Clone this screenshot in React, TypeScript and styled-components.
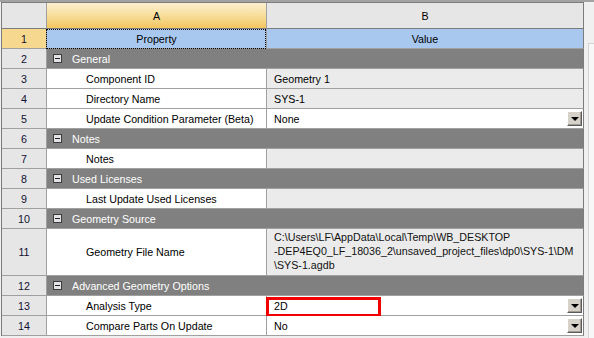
import React from 'react'
import styled, { createGlobalStyle } from 'styled-components'

const GlobalStyle = createGlobalStyle`
    html, body {
        margin: 0;
        padding: 0;
        background: #f0f0f0;
    }
    body {
        font-family: "Liberation Sans", Arial, sans-serif;
        font-size: 10.7px;
        color: #000;
    }
`

const Frame = styled.div`
    display: flex;
    width: 594px;
    height: 338px;
    border-top: 2px solid #a3a3a3;
    box-sizing: border-box;
    overflow: hidden;
`

const Sheet = styled.div`
    display: grid;
    grid-template-columns: 45px 220px 317px;
    grid-template-rows: 26px repeat(10, 20px) 47px repeat(3, 20px);
    margin-left: 1px;
    border-left: 1px solid #7c7c7c;
    border-top: 1px solid #7c7c7c;
    align-self: flex-start;
`

const Cell = styled.div<{ $edge?: boolean }>`
    box-sizing: border-box;
    border-right: 1px solid ${(p) => (p.$edge ? '#7c7c7c' : '#a0a0a0')};
    border-bottom: 1px solid #a0a0a0;
    display: flex;
    align-items: center;
    min-width: 0;
    white-space: nowrap;
    position: relative;
`

const ColHead = styled(Cell)<{ $active?: boolean }>`
    justify-content: center;
    background: ${(p) => p.$active
        ? 'linear-gradient(#fbefcf 0%, #f8e0a0 45%, #f3c660 100%)'
        : '#e6e6e6'};
    border-bottom-color: #7c7c7c;
`

const RowNum = styled(Cell)<{ $active?: boolean }>`
    justify-content: center;
    background: ${(p) => (p.$active ? '#f6d98e' : '#e6e6e6')};
    color: #101030;
`

const TitleCell = styled(Cell)<{ $focus?: boolean }>`
    justify-content: center;
    background: #a8c8f0;
    ${(p) => p.$focus && `
        &::after {
            content: '';
            position: absolute;
            inset: 0 0 -1px -1px;
            border: 1px dotted #000;
        }
    `}
`

const Category = styled(Cell)`
    grid-column: span 2;
    background: #808080;
    color: #fff;
    padding-left: 6px;
    gap: 10px;
`

const Toggle = styled.span`
    position: relative;
    width: 9px;
    height: 9px;
    box-sizing: border-box;
    border: 1px solid #3c3c3c;
    background: #e4e4e8;
    flex: none;
    &::after {
        content: '';
        position: absolute;
        left: 1px;
        right: 1px;
        top: 3px;
        height: 1px;
        background: #202020;
    }
`

const PropCell = styled(Cell)`
    background: #fff;
    padding-left: 39px;
`

const ValueCell = styled(Cell)<{ $editable?: boolean }>`
    background: ${(p) => (p.$editable ? '#fff' : '#ebebeb')};
    padding-left: 7px;
    padding-right: 1px;
    justify-content: space-between;
`

const PathText = styled.div`
    line-height: 14px;
    color: #111;
    margin-top: -2px;
`

const Dropdown = styled.span`
    position: relative;
    width: 15px;
    height: 15px;
    box-sizing: border-box;
    background: #d6d2ca;
    border: 1px solid;
    border-color: #fff #5a5a5a #5a5a5a #fff;
    box-shadow: inset -1px -1px 0 #a09c94;
    flex: none;
    &::after {
        content: '';
        position: absolute;
        left: 3px;
        top: 5px;
        border-left: 4px solid transparent;
        border-right: 4px solid transparent;
        border-top: 4px solid #000;
    }
`

const Highlight = styled.span`
    position: absolute;
    left: -1px;
    top: 1px;
    width: 115px;
    height: 20px;
    box-sizing: border-box;
    border: 3px solid #f20000;
    pointer-events: none;
`

const Side = styled.div`
    flex: 1;
    padding-top: 41px;
    padding-left: 4px;
`

const SidePanel = styled.div`
    height: 100%;
    background: #f7f7f7;
    border-left: 1px solid #d4d4d4;
    border-top: 1px solid #d4d4d4;
`

type Row =
    | { kind: 'cat'; label: string }
    | { kind: 'prop'; label: string; value?: string; editable?: boolean; mark?: boolean; lines?: string[] }

const rows: Row[] = [
    { kind: 'cat', label: 'General' },
    { kind: 'prop', label: 'Component ID', value: 'Geometry 1' },
    { kind: 'prop', label: 'Directory Name', value: 'SYS-1' },
    { kind: 'prop', label: 'Update Condition Parameter (Beta)', value: 'None', editable: true },
    { kind: 'cat', label: 'Notes' },
    { kind: 'prop', label: 'Notes' },
    { kind: 'cat', label: 'Used Licenses' },
    { kind: 'prop', label: 'Last Update Used Licenses' },
    { kind: 'cat', label: 'Geometry Source' },
    {
        kind: 'prop',
        label: 'Geometry File Name',
        lines: [
            'C:\\Users\\LF\\AppData\\Local\\Temp\\WB_DESKTOP',
            '-DEP4EQ0_LF_18036_2\\unsaved_project_files\\dp0\\SYS-1\\DM',
            '\\SYS-1.agdb',
        ],
    },
    { kind: 'cat', label: 'Advanced Geometry Options' },
    { kind: 'prop', label: 'Analysis Type', value: '2D', editable: true, mark: true },
    { kind: 'prop', label: 'Compare Parts On Update', value: 'No', editable: true },
]

export default function App() {
    return (
        <>
            <GlobalStyle />
            <Frame>
                <Sheet>
                    <ColHead />
                    <ColHead $active>A</ColHead>
                    <ColHead $edge>B</ColHead>

                    <RowNum $active>1</RowNum>
                    <TitleCell $focus>Property</TitleCell>
                    <TitleCell $edge>Value</TitleCell>

                    {rows.map((row, i) => {
                        const n = i + 2
                        if (row.kind === 'cat') {
                            return (
                                <React.Fragment key={n}>
                                    <RowNum>{n}</RowNum>
                                    <Category $edge>
                                        <Toggle />
                                        {row.label}
                                    </Category>
                                </React.Fragment>
                            )
                        }
                        return (
                            <React.Fragment key={n}>
                                <RowNum>{n}</RowNum>
                                <PropCell>{row.label}</PropCell>
                                <ValueCell $edge $editable={row.editable}>
                                    {row.lines ? (
                                        <PathText>
                                            {row.lines.map((l) => (
                                                <div key={l}>{l}</div>
                                            ))}
                                        </PathText>
                                    ) : (
                                        <span>{row.value}</span>
                                    )}
                                    {row.editable && <Dropdown />}
                                    {row.mark && <Highlight />}
                                </ValueCell>
                            </React.Fragment>
                        )
                    })}
                </Sheet>
                <Side>
                    <SidePanel />
                </Side>
            </Frame>
        </>
    )
}
